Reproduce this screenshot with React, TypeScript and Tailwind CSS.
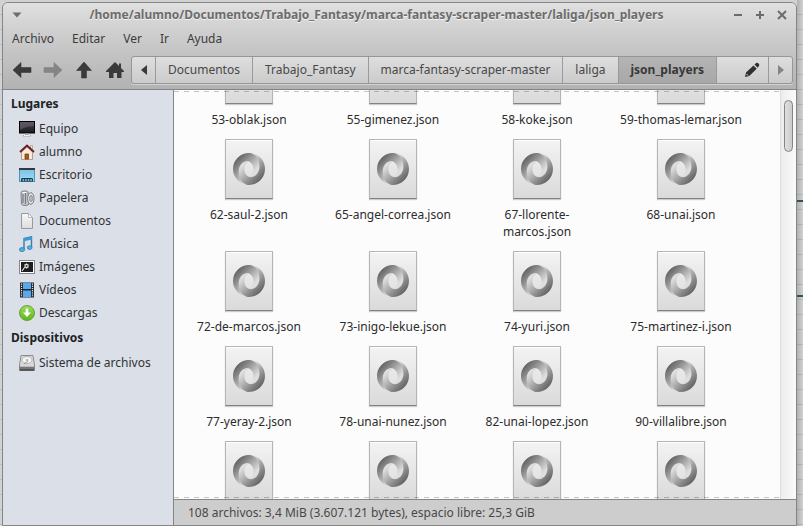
import type { ReactNode } from "react";

const stroke = { fill: "none", stroke: "currentColor", strokeWidth: 2 } as const;

function Icon16({ children }: { children: ReactNode }) {
  return (
    <svg viewBox="0 0 16 16" className="size-4 shrink-0" aria-hidden="true">
      {children}
    </svg>
  );
}

const ComputerIcon = () => (
  <Icon16>
    <rect x="0.5" y="0.5" width="15" height="11.5" fill="url(#screen)" stroke="#000" />
    <path d="M1 1H15V5Q7 5 1 9Z" fill="#6b6570" opacity=".6" />
    <path d="M6 12.500H10V14H12V15.500H4V14H6Z" fill="#a9a9a9" />
    <path d="M5 14.500H11" stroke="#f2f2f2" />
  </Icon16>
);

const HomeIcon = () => (
  <Icon16>
    <path d="M11.500 1.500H13.500V6H11.500Z" fill="#f3e2d2" stroke="#b59579" strokeWidth=".7" />
    <path d="M2.500 8L8 3L13.500 8V15.500H2.500Z" fill="#f8e9dc" stroke="#a88c77" strokeWidth=".8" />
    <path d="M6 15V10H9.500V15Z" fill="#a55a1c" stroke="#7c3d0c" strokeWidth=".8" />
    <path d="M1 8L8 1.500L15 8" fill="none" stroke="#682025" strokeWidth="1.900" />
  </Icon16>
);

const DesktopIcon = () => (
  <Icon16>
    <rect x="0.500" y="1.500" width="15" height="13" fill="url(#sky)" stroke="#4d93bd" />
    <path d="M0 1H16V3H0Z" fill="#35383d" />
    <path d="M2 14.500V12L3 11H13L14 12V14.500Z" fill="#1c3a4b" />
    <path d="M3.500 13H13" stroke="#9cdcf5" strokeWidth="1.600" strokeDasharray="1.600 1" />
  </Icon16>
);

const TrashIcon = () => (
  <Icon16>
    <path d="M2 3Q2 1 5 1Q8 0.500 9 2L10 14Q9 15.500 6 15.500Q3 15.500 2.500 14Z" fill="#c4c7ca" stroke="#74787c" strokeWidth=".9" />
    <path d="M4 4V13M6.500 3V14" stroke="#777b80" strokeWidth="1.200" />
    <path d="M3.500 2.500H7.500" stroke="#fff" />
    <ellipse cx="11.800" cy="8.500" rx="3.200" ry="5.800" fill="#e4e6e8" stroke="#75797d" />
    <ellipse cx="12" cy="8.500" rx="1.500" ry="3.200" fill="#b5b8bc" stroke="#80848a" strokeWidth=".7" />
  </Icon16>
);

const DocumentIcon = () => (
  <Icon16>
    <path d="M2.500 0.500H9.500L13.500 4.500V15.500H2.500Z" fill="url(#paper)" stroke="#999" />
    <path d="M9.500 0.500V4.500H13.500Z" fill="#fff" stroke="#aaa" strokeWidth=".8" />
  </Icon16>
);

const MusicIcon = () => (
  <Icon16>
    <path d="M5 13V2.500L12.500 0.800V11" fill="none" stroke="#2f7fb4" strokeWidth="1.400" />
    <path d="M5 2L13 0.300V3.500L5 5.200Z" fill="#3d9ad1" />
    <ellipse cx="3" cy="13.600" rx="2.700" ry="2" fill="#55ace0" stroke="#2978ac" strokeWidth=".7" />
    <ellipse cx="10.700" cy="11.600" rx="2.400" ry="1.900" fill="#55ace0" stroke="#2978ac" strokeWidth=".7" />
  </Icon16>
);

const ImagesIcon = () => (
  <Icon16>
    <rect x="0.500" y="1.500" width="15" height="13" fill="#fff" stroke="#858585" />
    <rect x="2" y="3" width="12" height="10" fill="#1d1d1d" />
    <path d="M7.500 4.500V9.500M5 7H10M5.700 5.200L9.300 8.800M9.300 5.200L5.700 8.800M5.500 8.500L3 12" stroke="#eee" strokeWidth="1.100" />
    <circle cx="7.500" cy="7" r="1" fill="#333" />
  </Icon16>
);

const VideosIcon = () => (
  <Icon16>
    <path d="M1 0.500H15V15.500H1Z" fill="#26282b" />
    <path d="M4 1H12V7H4ZM4 8.500H12V15H4Z" fill="#55a9ee" />
    <path d="M2.500 1.500V15M13.500 1.500V15" stroke="#e5e5e5" strokeWidth="1.200" strokeDasharray="1.200 1" />
  </Icon16>
);

const DownloadsIcon = () => (
  <Icon16>
    <circle cx="8" cy="8" r="7.500" fill="url(#green)" stroke="#5c9f25" strokeWidth=".9" />
    <path d="M6.700 3.500H9.300V7.500H12L8 12L4 7.500H6.700Z" fill="#fff" />
  </Icon16>
);

const DriveIcon = () => (
  <Icon16>
    <path d="M2 0.500H14L15.500 10V15.500H0.500V10Z" fill="#d8d8d8" stroke="#858585" strokeWidth=".9" />
    <ellipse cx="8" cy="5" rx="5" ry="3.500" fill="#f4f4f4" stroke="#aaa" strokeWidth=".8" />
    <ellipse cx="8" cy="5" rx="1.500" ry="1" fill="#bbb" />
    <path d="M5 9L9 6" stroke="#999" />
    <path d="M0.500 11H15.500V15.500H0.500Z" fill="#777" />
    <path d="M1 11.500H15" stroke="#bbb" />
    <path d="M1 15H15" stroke="#333" />
  </Icon16>
);

const places = [
  { name: "Equipo", icon: <ComputerIcon /> },
  { name: "alumno", icon: <HomeIcon /> },
  { name: "Escritorio", icon: <DesktopIcon /> },
  { name: "Papelera", icon: <TrashIcon /> },
  { name: "Documentos", icon: <DocumentIcon /> },
  { name: "Música", icon: <MusicIcon /> },
  { name: "Imágenes", icon: <ImagesIcon /> },
  { name: "Vídeos", icon: <VideosIcon /> },
  { name: "Descargas", icon: <DownloadsIcon /> },
];

const devices = [{ name: "Sistema de archivos", icon: <DriveIcon /> }];

const files = [
  "53-oblak.json",
  "55-gimenez.json",
  "58-koke.json",
  "59-thomas-lemar.json",
  "62-saul-2.json",
  "65-angel-correa.json",
  "67-llorente-marcos.json",
  "68-unai.json",
  "72-de-marcos.json",
  "73-inigo-lekue.json",
  "74-yuri.json",
  "75-martinez-i.json",
  "77-yeray-2.json",
  "78-unai-nunez.json",
  "82-unai-lopez.json",
  "90-villalibre.json",
  "",
  "",
  "",
  "",
];

function Gradients() {
  return (
    <svg className="absolute size-0" aria-hidden="true">
      <defs>
        <linearGradient id="screen" x2="0" y2="1">
          <stop stopColor="#49434e" />
          <stop offset="1" stopColor="#1c1920" />
        </linearGradient>
        <linearGradient id="sky" x2="0" y2="1">
          <stop stopColor="#7cc0e6" />
          <stop offset="1" stopColor="#9ddcf8" />
        </linearGradient>
        <linearGradient id="paper" x2="0" y2="1">
          <stop stopColor="#f8f8f8" />
          <stop offset="1" stopColor="#dcdcdc" />
        </linearGradient>
        <linearGradient id="green" x2="0" y2="1">
          <stop stopColor="#9bdc5c" />
          <stop offset="1" stopColor="#5cb81c" />
        </linearGradient>
        <linearGradient id="ringDark" gradientUnits="userSpaceOnUse" x1="29" y1="24" x2="105" y2="95">
          <stop stopColor="#686868" />
          <stop offset="1" stopColor="#dedede" />
        </linearGradient>
        <linearGradient id="ringLight" gradientUnits="userSpaceOnUse" x1="131" y1="136" x2="50" y2="60">
          <stop stopColor="#686868" />
          <stop offset="1" stopColor="#dedede" />
        </linearGradient>
      </defs>
    </svg>
  );
}

function JsonIcon() {
  return (
    <span className="flex h-15 w-12 shrink-0 items-center justify-center border border-[#b5b5b5] border-b-[#828282] bg-linear-to-b from-[#f3f3f3] to-[#dadada] shadow-[0_1px_1px_#00000030,inset_0_1px_0_#ffffff]">
      <svg viewBox="0 0 160 160" className="size-8" aria-hidden="true">
        <path
          fill="url(#ringDark)"
          d="M79.900 119.100c35.400 48.300 70-13.600 70-50.800C149.800 24.300 105.200-.3 79.900-.3 39.200-.3 0 33.300 0 79.900 0 131.600 45 160 79.900 160c-7.900-1.100-34.200-6.800-34.500-67.300-.2-41 13.300-57.300 34.300-50.100.5.200 23.200 9.200 23.200 38.400 0 29.200-23 38.100-23 38.100z"
        />
        <path
          fill="url(#ringLight)"
          d="M79.800 42.600C56.700 34.600 28.400 53.700 28.400 91.900 28.400 154.100 74.500 160 80.200 160 120.800 160 160 126.400 160 79.800 160 28.100 115-.3 80.100-.3c9.700-1.300 52.100 10.400 52.100 69 0 38.100-31.900 58.900-52.200 50.500-.5-.2-23.200-9.200-23.200-38.400 0-29.200 23-38.200 23-38.200z"
        />
      </svg>
    </span>
  );
}

function FileItem({ name }: { name: string }) {
  return (
    <li className="flex justify-center pb-[11px]">
      <button type="button" aria-label={name || "json"} className="flex w-[130px] flex-col items-center gap-[7px] text-[#2c2c2c]">
        <JsonIcon />
        <span className="min-h-[17px] text-center leading-[17px]">{name}</span>
      </button>
    </li>
  );
}

function PlaceList({ title, items }: { title: string; items: typeof places }) {
  return (
    <section>
      <h2 className="px-2 text-[12px] leading-[27px] font-bold text-[#202224]">{title}</h2>
      <ul>
        {items.map((item) => (
          <li key={item.name}>
            <a href={"#" + item.name} className="flex h-[23px] items-center gap-1 pl-4">
              {item.icon}
              {item.name}
            </a>
          </li>
        ))}
      </ul>
    </section>
  );
}

function TitleBar() {
  return (
    <div className="flex h-6 items-center pr-1.5 pl-2 text-[#6c6c6c]">
      <button type="button" aria-label="Menú de la ventana" className="grid h-4 w-3 place-items-center">
        <svg viewBox="0 0 10 6" className="h-1.5 w-2.5">
          <path d="M0.500 0.500H9.500L5 5.500Z" fill="currentColor" />
        </svg>
      </button>
      <h1 className="flex-1 text-center text-[12px] font-bold text-shadow-[0_1px_0_#f2f2f2]">
        /home/alumno/Documentos/Trabajo_Fantasy/marca-fantasy-scraper-master/laliga/json_players
      </h1>
      <div className="flex gap-1.5">
        <button type="button" aria-label="Minimizar" className="size-4">
          <svg viewBox="0 0 16 16" {...stroke}><path d="M4 8H12" /></svg>
        </button>
        <button type="button" aria-label="Maximizar" className="size-4">
          <svg viewBox="0 0 16 16" {...stroke}><path d="M4 8H12M8 4V12" /></svg>
        </button>
        <button type="button" aria-label="Cerrar" className="size-4">
          <svg viewBox="0 0 16 16" {...stroke}><path d="M4 4L12 12M12 4L4 12" /></svg>
        </button>
      </div>
    </div>
  );
}

function Toolbar() {
  return (
    <div className="flex h-[39px] items-center pt-px pr-[3px] pl-[9px] text-[#3a3a3a]">
      <nav aria-label="Navegación" className="flex gap-[11px]">
        <button type="button" aria-label="Atrás" className="size-5">
          <svg viewBox="0 0 20 20"><path d="M1 10L9 2.500V7.500H19V12.500H9V17.500Z" fill="currentColor" stroke="currentColor" strokeLinejoin="round" strokeWidth=".6" /></svg>
        </button>
        <button type="button" aria-label="Adelante" className="size-5 text-[#858585]">
          <svg viewBox="0 0 20 20"><path d="M19 10L11 2.500V7.500H1V12.500H11V17.500Z" fill="currentColor" stroke="currentColor" strokeLinejoin="round" strokeWidth=".6" /></svg>
        </button>
        <button type="button" aria-label="Subir" className="size-5">
          <svg viewBox="0 0 20 20"><path d="M10 2L17.500 10.500H12.500V18H7.500V10.500H2.500Z" fill="currentColor" stroke="currentColor" strokeLinejoin="round" strokeWidth=".6" /></svg>
        </button>
        <button type="button" aria-label="Carpeta personal" className="size-5">
          <svg viewBox="0 0 20 20"><path d="M10 2L14 6V3.500H16V8L19 11V12H16.500V18H12V13H8.500V18H4V12H1V11Z" fill="currentColor" /></svg>
        </button>
      </nav>
      <div className="ml-1.5 flex h-7 min-w-0 flex-1 divide-x divide-[#9a9a9a] rounded-[3px] border border-[#969696] bg-linear-to-b from-[#dedede] to-[#cbcbcb] text-[#484848] shadow-[0_1px_0_#d2d2d2]">
        <button type="button" aria-label="Desplazar a la izquierda" className="grid w-6 shrink-0 place-items-center text-[#3a3a3a]">
          <svg viewBox="0 0 6 10" className="h-2.5 w-1.5"><path d="M6 0V10L0 5Z" fill="currentColor" /></svg>
        </button>
        <button type="button" className="px-3">Documentos</button>
        <button type="button" className="px-3">Trabajo_Fantasy</button>
        <button type="button" className="px-3">marca-fantasy-scraper-master</button>
        <button type="button" className="px-3">laliga</button>
        <button type="button" aria-current="page" className="bg-linear-to-b from-[#b4b4b4] to-[#a8a8a8] px-3 font-bold text-[#383838]">json_players</button>
        <button type="button" aria-label="Editar la ruta" className="flex flex-1 items-center justify-end pr-2 text-[#303030]">
          <svg viewBox="0 0 16 16" className="size-4">
            <path d="M1 15L2 10.500L9.500 3.500L12.700 6.800L5.300 14ZM10.500 2.600L12.500 0.800Q15.300 0.800 15.300 3.500L13.500 5.800Z" fill="currentColor" />
            <path d="M2.500 12L4 13.500" stroke="#ddd" />
          </svg>
        </button>
        <button type="button" aria-label="Desplazar a la derecha" className="grid w-[23px] shrink-0 place-items-center text-[#858585]">
          <svg viewBox="0 0 6 10" className="h-2.5 w-1.5"><path d="M0 0V10L6 5Z" fill="currentColor" /></svg>
        </button>
      </div>
    </div>
  );
}

const dashes = "absolute left-0 right-4 h-px bg-[repeating-linear-gradient(90deg,#00000038_0_5px,transparent_5px_10px)]";

export default function App() {
  return (
    <div className="flex h-screen bg-[#d3d5d6] bg-[repeating-linear-gradient(#d0d2d3_0_14px,#bbbec0_14px_15px)] pl-0.5 font-['Noto_Sans',sans-serif] text-[12px] text-[#3c3c3c]">
      <Gradients />
      <main className="mt-0.5 flex min-w-0 flex-1 flex-col overflow-hidden rounded-t-md border border-[#858585] bg-[#cdcdcd]">
        <header className="border-b border-[#858585] bg-linear-to-b from-[#e0e0e0] via-[#cecece] via-35% to-[#b2b2b2]">
          <TitleBar />
          <nav aria-label="Menú" className="flex h-[23px] items-center gap-[18px] pl-[9px]">
            {["Archivo", "Editar", "Ver", "Ir", "Ayuda"].map((item) => (
              <button key={item} type="button">{item}</button>
            ))}
          </nav>
          <Toolbar />
        </header>
        <div className="flex min-h-0 flex-1">
          <aside className="w-[171px] shrink-0 border-r border-[#858585] bg-[#dbdfe7] text-[#303335]">
            <PlaceList title="Lugares" items={places} />
            <PlaceList title="Dispositivos" items={devices} />
          </aside>
          <div className="flex min-w-0 flex-1 flex-col">
            <div className="relative flex min-h-0 flex-1 bg-[#fcfcfc]">
              <div className="flex min-w-0 flex-1 flex-col overflow-hidden pl-[3px]">
                <ul className="-mt-[46px] grid grid-cols-[repeat(auto-fill,144px)]">
                  {files.map((name, i) => (
                    <FileItem key={i} name={name} />
                  ))}
                </ul>
              </div>
              <div className="w-4 shrink-0 border-l border-[#dcdcdc] bg-linear-to-r from-[#ededed] to-[#fafafa] pt-2.5 pl-[3px]">
                <div className="h-[52px] w-[9px] rounded-full border border-[#858585] bg-linear-to-r from-[#e0e0e0] to-[#cbcbcb]" />
              </div>
              <div className={dashes + " top-px"} />
              <div className={dashes + " bottom-px"} />
            </div>
            <footer className="h-[26px] border-t border-[#858585] pl-3.5 leading-[25px] text-[#484848]">
              108 archivos: 3,4 MiB (3.607.121 bytes), espacio libre: 25,3 GiB
            </footer>
          </div>
        </div>
      </main>
      <div className="w-1.5 shrink-0 bg-linear-to-r from-[#00000028] to-transparent">
        <div className="h-[202px] border-b-2 border-[#2f5558]" />
        <div className="h-[95px] border-b-2 border-[#2f5558]" />
      </div>
    </div>
  );
}
